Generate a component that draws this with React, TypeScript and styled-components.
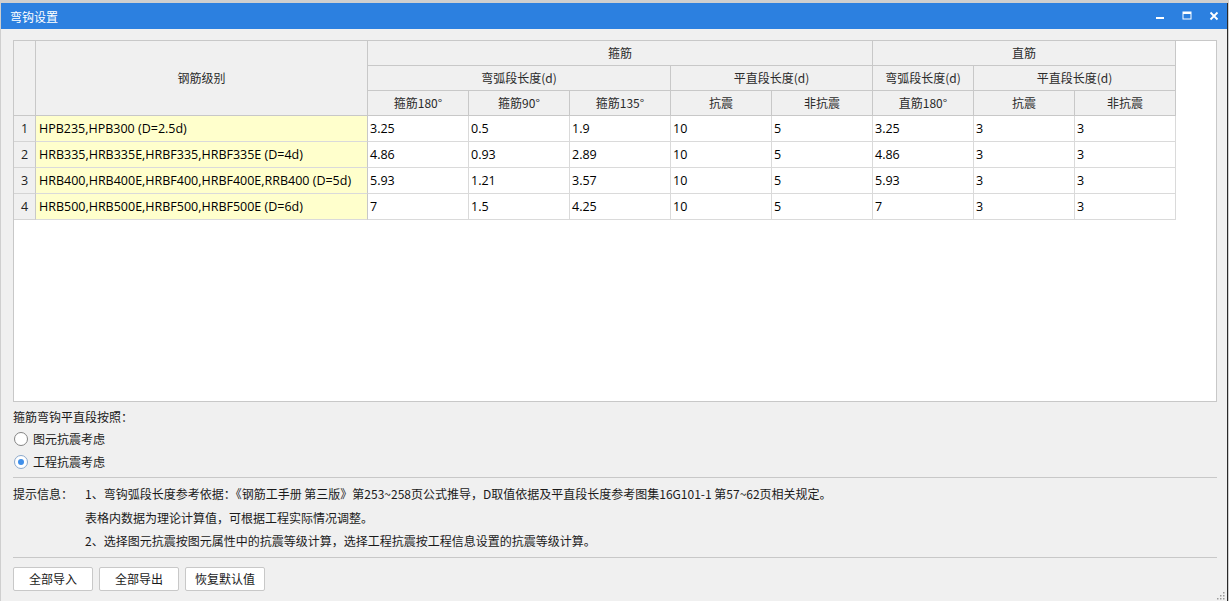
import React from "react";
import styled, { createGlobalStyle } from "styled-components";

const Global = createGlobalStyle`
  html, body { margin: 0; padding: 0; background: #d4d4d4; }
  body { font-family: "Open Sans", "Noto Sans CJK SC", sans-serif; font-size: 12px; color: #1a1a1a; }
  * { box-sizing: border-box; }
`;

const Screen = styled.div`
  width: 1229px;
  height: 601px;
  padding-top: 3px;
  background: #cfcfcf;
  display: flex;
`;

const Window = styled.div`
  position: relative;
  margin-left: 1px;
  width: 1227px;
  height: 598px;
  background: #f0f0f0;
  border-right: 1px solid #2a2a2a;
  display: flex;
  flex-direction: column;
`;

const TitleBar = styled.div`
  height: 26px;
  background: #2c80e0;
  color: #fff;
  display: flex;
  align-items: center;
  padding-left: 9px;
  font-size: 12px;
  font-family: "Noto Sans CJK SC", sans-serif;
`;

const TitleText = styled.span`
  flex: 1;
`;

const WinButtons = styled.div`
  display: flex;
  align-items: center;
  height: 100%;
`;

const WinButton = styled.div`
  width: 27px;
  height: 26px;
  display: flex;
  align-items: center;
  justify-content: center;
`;

const Content = styled.div`
  flex: 1;
  padding: 11px 10px 0 12px;
  display: flex;
  flex-direction: column;
`;

const GridBox = styled.div`
  height: 362px;
  background: #fff;
  border: 1px solid #c8c8c8;
  width: 1204px;
`;

const Grid = styled.div`
  display: grid;
  grid-template-columns: 22px 332px repeat(8, 101px);
  grid-template-rows: 25px 25px 25px repeat(4, 26px);
  width: 1162px;
`;

const HeadCell = styled.div<{ $rows?: number; $cols?: number }>`
  grid-row: span ${(p) => p.$rows ?? 1};
  grid-column: span ${(p) => p.$cols ?? 1};
  background: #f0f0f0;
  border-right: 1px solid #c8c8c8;
  border-bottom: 1px solid #c8c8c8;
  display: flex;
  align-items: center;
  justify-content: center;
  font-family: "Noto Sans CJK SC", sans-serif;
  font-size: 12px;
  color: #2a2a2a;
  padding-bottom: 1px;
`;

const RowNum = styled.div`
  background: #f0f0f0;
  border-right: 1px solid #c8c8c8;
  border-bottom: 1px solid #d4d4d4;
  display: flex;
  align-items: center;
  justify-content: center;
  font-size: 12.5px;
  color: #222;
`;

const Cell = styled.div<{ $name?: boolean }>`
  background: ${(p) => (p.$name ? "#ffffcc" : "#fff")};
  border-right: 1px solid ${(p) => (p.$name ? "#c8c8c8" : "#dadada")};
  border-bottom: 1px solid #dadada;
  display: flex;
  align-items: center;
  padding-left: ${(p) => (p.$name ? "3px" : "2px")};
  font-size: 12.5px;
  color: #000;
  white-space: nowrap;
  overflow: hidden;
`;

const SectionLabel = styled.div`
  margin-top: 5px;
  height: 20px;
  line-height: 20px;
  font-family: "Noto Sans CJK SC", sans-serif;
`;

const RadioRow = styled.label`
  height: 23px;
  display: flex;
  align-items: center;
  gap: 5px;
  font-family: "Noto Sans CJK SC", sans-serif;
`;

const RadioCircle = styled.span<{ $on?: boolean }>`
  width: 14px;
  height: 14px;
  margin-left: 1px;
  border-radius: 50%;
  border: 1px solid ${(p) => (p.$on ? "#8aa8cc" : "#858585")};
  background: #fff;
  display: flex;
  align-items: center;
  justify-content: center;
  &::after {
    content: "";
    width: 6px;
    height: 6px;
    border-radius: 50%;
    background: ${(p) => (p.$on ? "#3f8fea" : "transparent")};
  }
`;

const Divider = styled.div<{ $top: number }>`
  margin-top: ${(p) => p.$top}px;
  height: 1px;
  width: 1204px;
  background: #c8c8c8;
`;

const Hints = styled.div`
  margin-top: 4px;
  display: grid;
  grid-template-columns: 72px 1fr;
  grid-auto-rows: 23.5px;
  align-items: center;
  font-family: "Noto Sans CJK SC", sans-serif;
  font-size: 12px;
  color: #1a1a1a;
`;

const ButtonRow = styled.div`
  margin-top: 9px;
  display: flex;
  gap: 6px;
`;

const Button = styled.button`
  width: 80px;
  height: 24px;
  background: #fff;
  border: 1px solid #c8c8c8;
  border-radius: 2px;
  font-family: "Noto Sans CJK SC", sans-serif;
  font-size: 12px;
  color: #1a1a1a;
  padding: 0;
`;

const Grip = styled.svg`
  position: absolute;
  right: 2px;
  bottom: 1px;
`;

const rows = [
  ["HPB235,HPB300 (D=2.5d)", "3.25", "0.5", "1.9", "10", "5", "3.25", "3", "3"],
  ["HRB335,HRB335E,HRBF335,HRBF335E (D=4d)", "4.86", "0.93", "2.89", "10", "5", "4.86", "3", "3"],
  ["HRB400,HRB400E,HRBF400,HRBF400E,RRB400 (D=5d)", "5.93", "1.21", "3.57", "10", "5", "5.93", "3", "3"],
  ["HRB500,HRB500E,HRBF500,HRBF500E (D=6d)", "7", "1.5", "4.25", "10", "5", "7", "3", "3"],
];

export default function App() {
  return (
    <>
      <Global />
      <Screen>
        <Window>
          <TitleBar>
            <TitleText>弯钩设置</TitleText>
            <WinButtons>
              <WinButton>
                <svg width="10" height="10" viewBox="0 0 10 10">
                  <rect x="1" y="6" width="8" height="2" fill="#fff" />
                </svg>
              </WinButton>
              <WinButton>
                <svg width="10" height="10" viewBox="0 0 10 10">
                  <rect x="1" y="1" width="8" height="7" fill="none" stroke="#fff" strokeWidth="1" />
                  <rect x="1" y="1" width="8" height="2" fill="#fff" />
                </svg>
              </WinButton>
              <WinButton>
                <svg width="10" height="10" viewBox="0 0 10 10">
                  <path d="M1.5 1.5 L8.5 8.5 M8.5 1.5 L1.5 8.5" stroke="#fff" strokeWidth="1.8" />
                </svg>
              </WinButton>
            </WinButtons>
          </TitleBar>
          <Content>
            <GridBox>
              <Grid>
                <HeadCell $rows={3} />
                <HeadCell $rows={3}>钢筋级别</HeadCell>
                <HeadCell $cols={5}>箍筋</HeadCell>
                <HeadCell $cols={3}>直筋</HeadCell>
                <HeadCell $cols={3}>弯弧段长度(d)</HeadCell>
                <HeadCell $cols={2}>平直段长度(d)</HeadCell>
                <HeadCell>弯弧段长度(d)</HeadCell>
                <HeadCell $cols={2}>平直段长度(d)</HeadCell>
                <HeadCell>箍筋180°</HeadCell>
                <HeadCell>箍筋90°</HeadCell>
                <HeadCell>箍筋135°</HeadCell>
                <HeadCell>抗震</HeadCell>
                <HeadCell>非抗震</HeadCell>
                <HeadCell>直筋180°</HeadCell>
                <HeadCell>抗震</HeadCell>
                <HeadCell>非抗震</HeadCell>
                {rows.map((r, i) => (
                  <React.Fragment key={i}>
                    <RowNum>{i + 1}</RowNum>
                    {r.map((v, j) => (
                      <Cell key={j} $name={j === 0}>
                        {v}
                      </Cell>
                    ))}
                  </React.Fragment>
                ))}
              </Grid>
            </GridBox>
            <SectionLabel>箍筋弯钩平直段按照：</SectionLabel>
            <RadioRow>
              <RadioCircle />
              图元抗震考虑
            </RadioRow>
            <RadioRow>
              <RadioCircle $on />
              工程抗震考虑
            </RadioRow>
            <Divider $top={4} />
            <Hints>
              <span>提示信息：</span>
              <span>
                1、弯钩弧段长度参考依据：《钢筋工手册 第三版》第253~258页公式推导，D取值依据及平直段长度参考图集16G101-1 第57~62页相关规定。
              </span>
              <span />
              <span>表格内数据为理论计算值，可根据工程实际情况调整。</span>
              <span />
              <span>2、选择图元抗震按图元属性中的抗震等级计算，选择工程抗震按工程信息设置的抗震等级计算。</span>
            </Hints>
            <Divider $top={4} />
            <ButtonRow>
              <Button>全部导入</Button>
              <Button>全部导出</Button>
              <Button>恢复默认值</Button>
            </ButtonRow>
          </Content>
          <Grip width="10" height="10" viewBox="0 0 10 10">
            {[
              [8, 2],
              [8, 5],
              [5, 5],
              [8, 8],
              [5, 8],
              [2, 8],
            ].map(([x, y], k) => (
              <rect key={k} x={x} y={y} width="1.5" height="1.5" fill="#9a9a9a" />
            ))}
          </Grip>
        </Window>
      </Screen>
    </>
  );
}
